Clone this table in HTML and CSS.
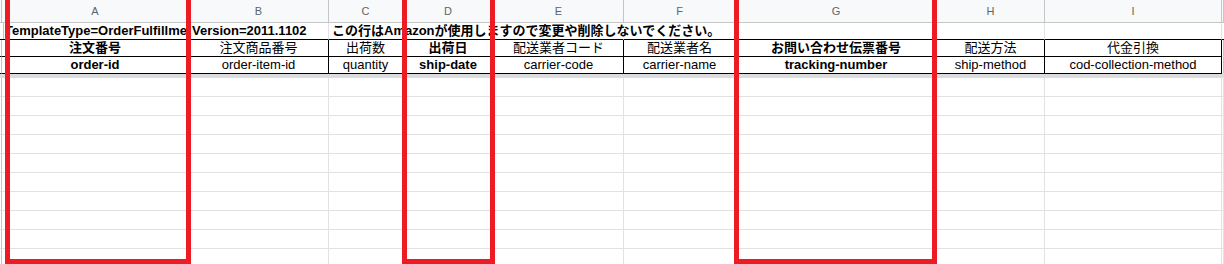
FILE: index.html
```html
<!DOCTYPE html>
<html lang="ja">
<head>
  <meta charset="UTF-8" />
  <meta name="viewport" content="width=device-width, initial-scale=1.0"/>
  <title>OrderFulfillment テンプレート</title>
  <link rel="stylesheet" href="styles.css">
</head>

<body>
  <div class="sheet">
    <!-- column letters -->
    <div class="row col-head">
      <div class="cell stub"></div>
      <div class="cell">A</div>
      <div class="cell">B</div>
      <div class="cell">C</div>
      <div class="cell">D</div>
      <div class="cell">E</div>
      <div class="cell">F</div>
      <div class="cell">G</div>
      <div class="cell">H</div>
      <div class="cell">I</div>
      <div class="cell"></div>
    </div>

    <!-- row 1: template info -->
    <div class="row meta">
      <div class="cell stub"></div>
      <div class="cell clip b">TemplateType=OrderFulfillment</div>
      <div class="cell b">Version=2011.1102</div>
      <div class="cell spill b">この行はAmazonが使用しますので変更や削除しないでください。</div>
      <div class="cell open"></div>
      <div class="cell open"></div>
      <div class="cell"></div>
      <div class="cell"></div>
      <div class="cell"></div>
      <div class="cell"></div>
      <div class="cell"></div>
    </div>

    <!-- row 2: labels -->
    <div class="row field">
      <div class="cell stub"></div>
      <div class="cell b">注文番号</div>
      <div class="cell">注文商品番号</div>
      <div class="cell">出荷数</div>
      <div class="cell b">出荷日</div>
      <div class="cell">配送業者コード</div>
      <div class="cell">配送業者名</div>
      <div class="cell b">お問い合わせ伝票番号</div>
      <div class="cell">配送方法</div>
      <div class="cell">代金引換</div>
      <div class="cell out"></div>
    </div>

    <!-- row 3: field ids -->
    <div class="row field">
      <div class="cell stub"></div>
      <div class="cell b">order-id</div>
      <div class="cell">order-item-id</div>
      <div class="cell">quantity</div>
      <div class="cell b">ship-date</div>
      <div class="cell">carrier-code</div>
      <div class="cell">carrier-name</div>
      <div class="cell b">tracking-number</div>
      <div class="cell">ship-method</div>
      <div class="cell">cod-collection-method</div>
      <div class="cell out"></div>
    </div>

    <div class="freeze"></div>

    <div class="row blank"><div class="cell stub"></div><div class="cell"></div><div class="cell"></div><div class="cell"></div><div class="cell"></div><div class="cell"></div><div class="cell"></div><div class="cell"></div><div class="cell"></div><div class="cell"></div><div class="cell"></div></div>
    <div class="row blank"><div class="cell stub"></div><div class="cell"></div><div class="cell"></div><div class="cell"></div><div class="cell"></div><div class="cell"></div><div class="cell"></div><div class="cell"></div><div class="cell"></div><div class="cell"></div><div class="cell"></div></div>
    <div class="row blank"><div class="cell stub"></div><div class="cell"></div><div class="cell"></div><div class="cell"></div><div class="cell"></div><div class="cell"></div><div class="cell"></div><div class="cell"></div><div class="cell"></div><div class="cell"></div><div class="cell"></div></div>
    <div class="row blank"><div class="cell stub"></div><div class="cell"></div><div class="cell"></div><div class="cell"></div><div class="cell"></div><div class="cell"></div><div class="cell"></div><div class="cell"></div><div class="cell"></div><div class="cell"></div><div class="cell"></div></div>
    <div class="row blank"><div class="cell stub"></div><div class="cell"></div><div class="cell"></div><div class="cell"></div><div class="cell"></div><div class="cell"></div><div class="cell"></div><div class="cell"></div><div class="cell"></div><div class="cell"></div><div class="cell"></div></div>
    <div class="row blank"><div class="cell stub"></div><div class="cell"></div><div class="cell"></div><div class="cell"></div><div class="cell"></div><div class="cell"></div><div class="cell"></div><div class="cell"></div><div class="cell"></div><div class="cell"></div><div class="cell"></div></div>
    <div class="row blank"><div class="cell stub"></div><div class="cell"></div><div class="cell"></div><div class="cell"></div><div class="cell"></div><div class="cell"></div><div class="cell"></div><div class="cell"></div><div class="cell"></div><div class="cell"></div><div class="cell"></div></div>
    <div class="row blank"><div class="cell stub"></div><div class="cell"></div><div class="cell"></div><div class="cell"></div><div class="cell"></div><div class="cell"></div><div class="cell"></div><div class="cell"></div><div class="cell"></div><div class="cell"></div><div class="cell"></div></div>
    <div class="row blank"><div class="cell stub"></div><div class="cell"></div><div class="cell"></div><div class="cell"></div><div class="cell"></div><div class="cell"></div><div class="cell"></div><div class="cell"></div><div class="cell"></div><div class="cell"></div><div class="cell"></div></div>
    <div class="row blank"><div class="cell stub"></div><div class="cell"></div><div class="cell"></div><div class="cell"></div><div class="cell"></div><div class="cell"></div><div class="cell"></div><div class="cell"></div><div class="cell"></div><div class="cell"></div><div class="cell"></div></div>

    <!-- required columns, circled in red -->
    <div class="mark mark-a"></div>
    <div class="mark mark-d"></div>
    <div class="mark mark-g"></div>
  </div>
</body>
</html>
```

FILE: styles.css
```css
body {
  margin: 0;
  padding: 0;
  background: #fff;
  overflow: hidden;
  font-family: 'Liberation Sans', Arial, 'Noto Sans CJK JP', sans-serif;
  font-size: 13px;
  color: #000;
}

.sheet {
  position: relative;
  width: 1224px;
  height: 264px;
  overflow: hidden;
}

.row {
  display: grid;
  grid-template-columns: 2px 187px 140px 74px 91px 130px 112px 201px 108px 177px 1fr;
}

.cell {
  box-sizing: border-box;
  border-right: 1px solid #e2e2e2;
  border-bottom: 1px solid #e2e2e2;
  white-space: nowrap;
  overflow: hidden;
}

.cell.stub {
  border-right-color: #c4c4c4;
}

.b {
  font-weight: bold;
}

/* column letters */
.col-head .cell {
  height: 23px;
  line-height: 22px;
  background: #f8f9fa;
  border-right-color: #c4c7c5;
  border-bottom-color: #c4c7c5;
  text-align: center;
  font-size: 11px;
  color: #5f6368;
}

/* row 1 */
.meta .cell {
  height: 17px;
  line-height: 16px;
  padding-left: 3px;
  border-bottom-color: #000;
}

.meta .spill {
  overflow: visible;
  border-right-color: transparent;
}

.meta .open {
  border-right-color: transparent;
}

/* rows 2 and 3 */
.field .cell {
  height: 17px;
  line-height: 16px;
  text-align: center;
  border-right-color: #000;
  border-bottom-color: #000;
}

.field .cell.stub,
.field .cell.out {
  border-right-color: #c4c4c4;
}

.field .cell.out {
  border-bottom-color: #e2e2e2;
}

.freeze {
  height: 4px;
  background: #dadce0;
}

.blank .cell {
  height: 19px;
}

.mark {
  position: absolute;
  top: -10px;
  height: 274px;
  box-sizing: border-box;
  border: 5px solid #ed1c24;
}

.mark-a {
  left: 5px;
  width: 186px;
}

.mark-d {
  left: 402px;
  width: 93px;
}

.mark-g {
  left: 734px;
  width: 203px;
}
```
